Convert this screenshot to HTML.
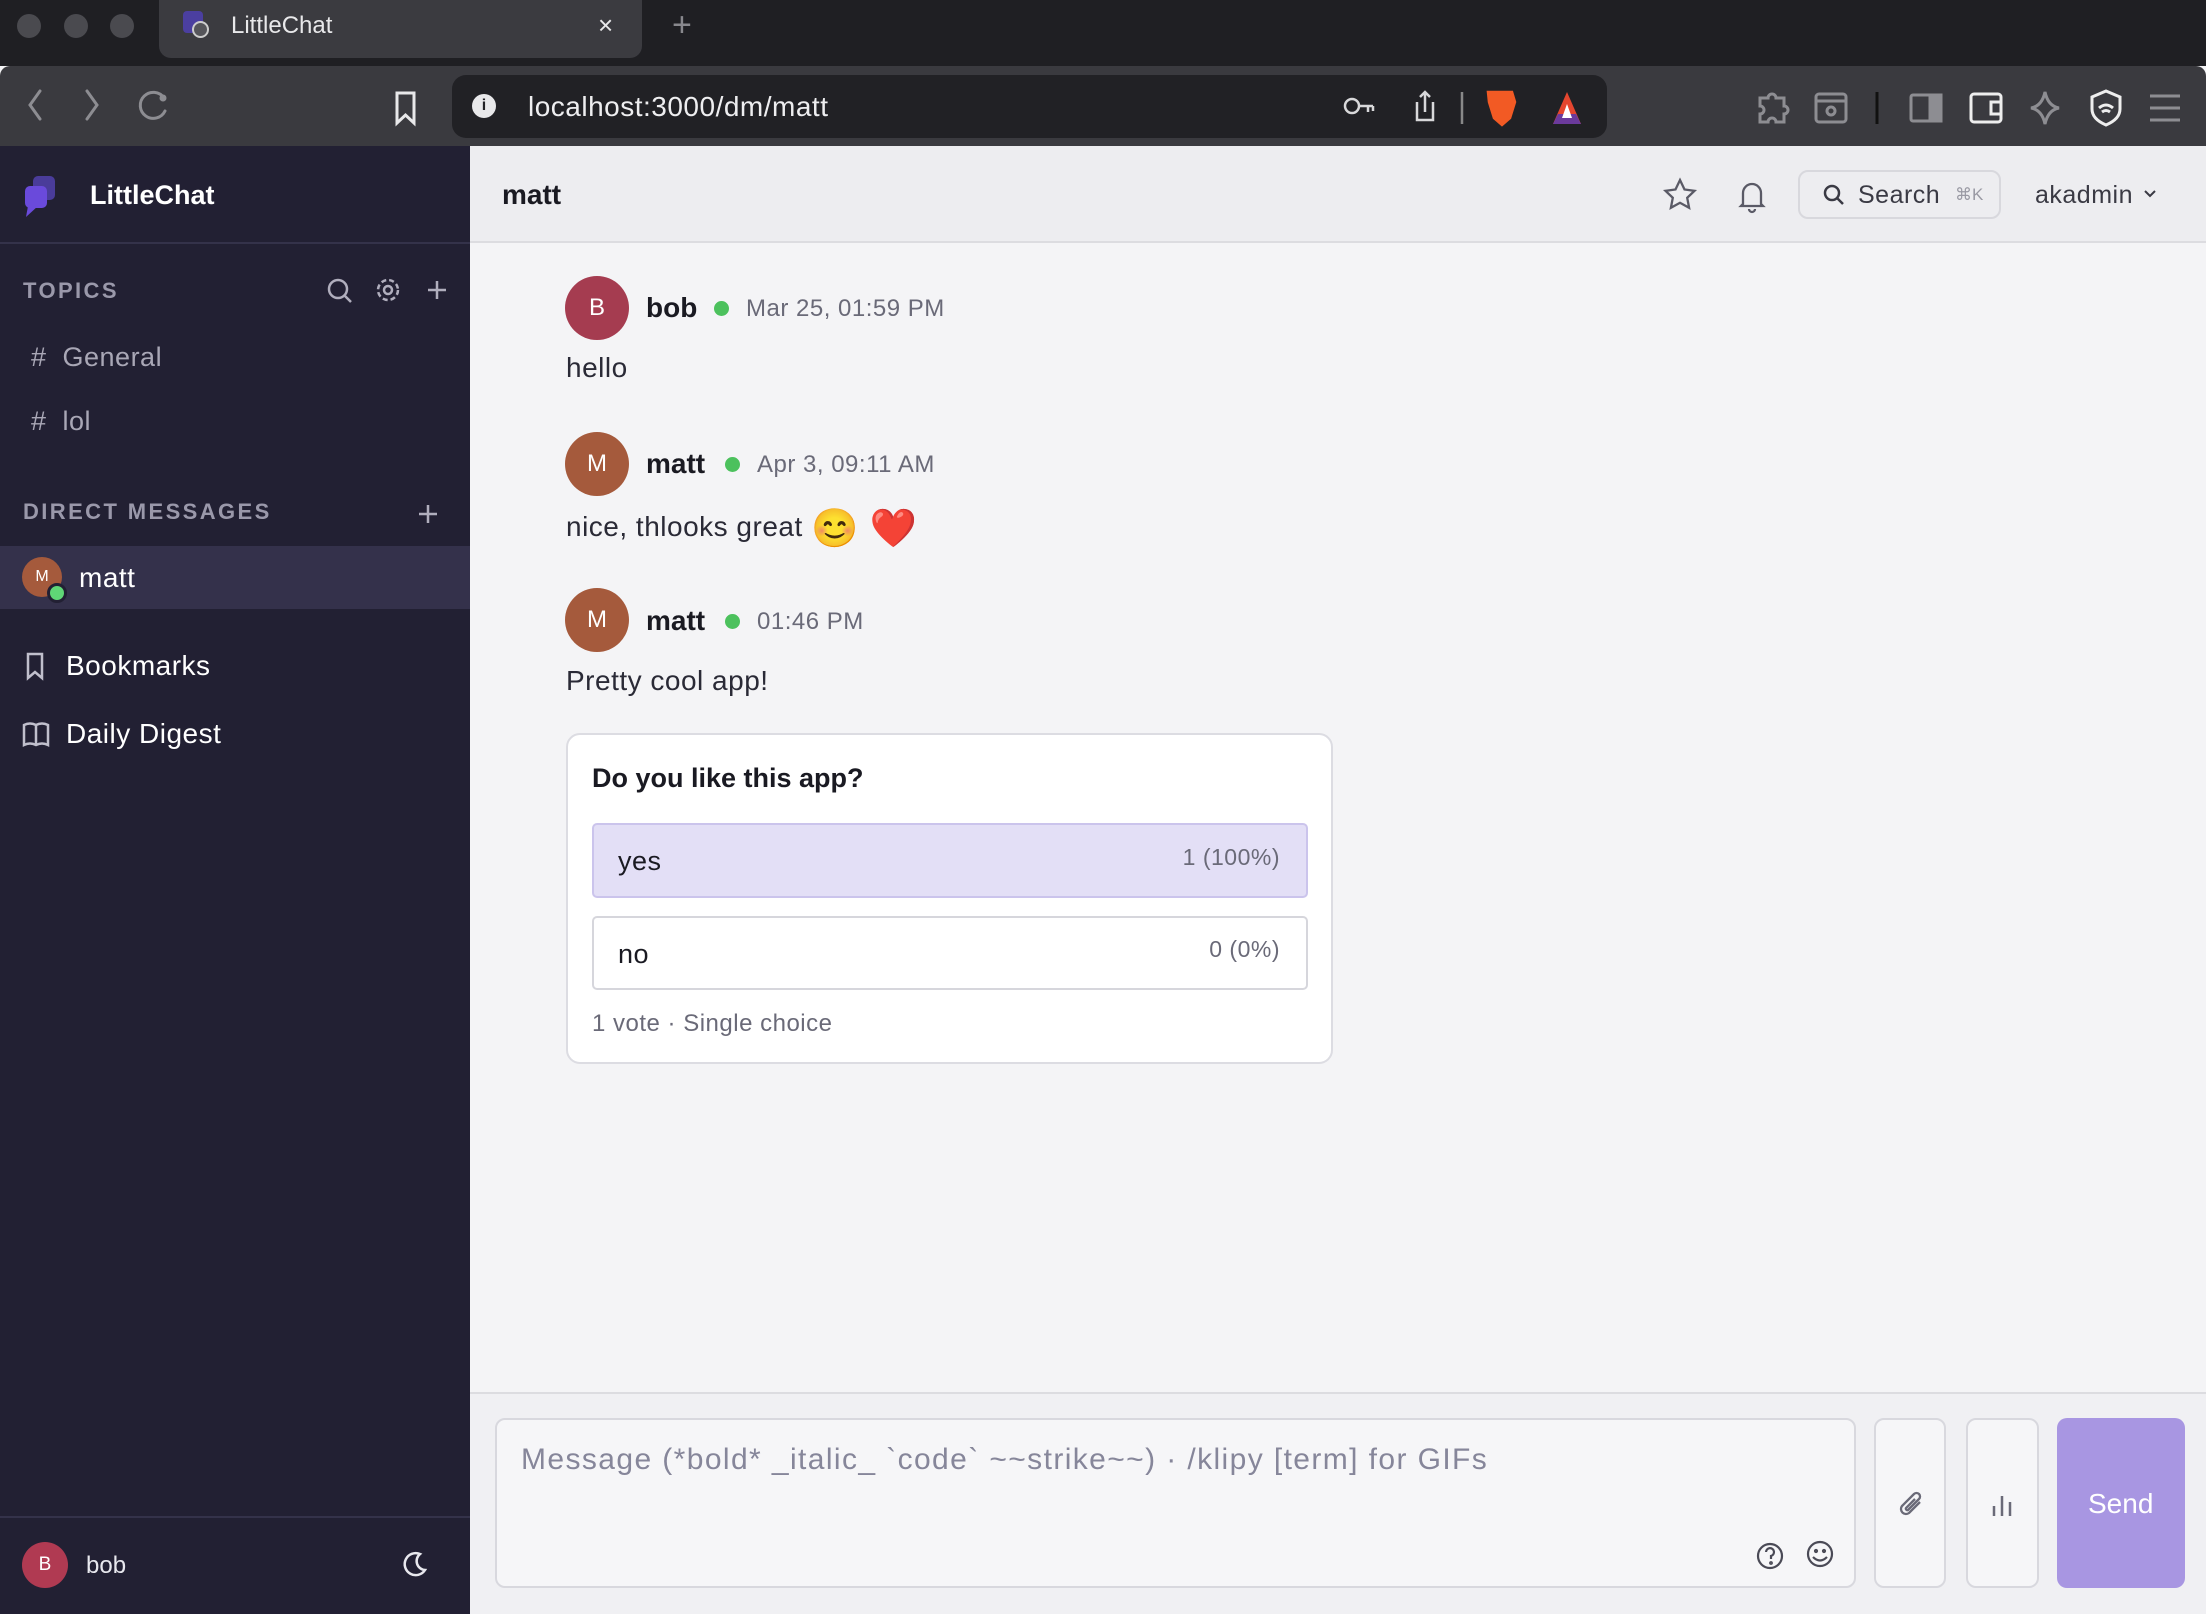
<!DOCTYPE html>
<html><head><meta charset="utf-8"><style>
*{margin:0;padding:0;box-sizing:border-box}
body{width:2206px;height:1614px;overflow:hidden;font-family:"Liberation Sans",sans-serif;background:#f4f4f6;position:relative}
.a{position:absolute}
.t{position:absolute;white-space:nowrap;line-height:1}
.w{letter-spacing:0.5px}
svg{position:absolute;overflow:visible}
</style></head><body>
<!-- tab bar -->
<div class="a" style="left:0;top:0;width:2206px;height:66px;background:#1f1f23"></div>
<div class="a" style="left:17px;top:14px;width:24px;height:24px;border-radius:50%;background:#4a4a4f"></div>
<div class="a" style="left:64px;top:14px;width:24px;height:24px;border-radius:50%;background:#4a4a4f"></div>
<div class="a" style="left:110px;top:14px;width:24px;height:24px;border-radius:50%;background:#4a4a4f"></div>
<div class="a" style="left:159px;top:0;width:483px;height:58px;background:#3b3b40;border-radius:0 0 12px 12px"></div>
<div class="a" style="left:183px;top:11px;width:20px;height:22px;background:#4b3fa0;border-radius:4px"></div>
<div class="a" style="left:192px;top:21px;width:17px;height:17px;border-radius:50%;background:#55555a;border:2px solid #ccc"></div>
<div class="t" style="left:231px;top:14px;font-size:24px;color:#e8e8ea">LittleChat</div>
<div class="t" style="left:598px;top:12px;font-size:26px;color:#e8e8ea">×</div>
<div class="t" style="left:672px;top:8px;font-size:34px;color:#88888d">+</div>
<!-- toolbar -->
<div class="a" style="left:0;top:66px;width:2206px;height:80px;background:#3a3a3f;border-radius:10px 10px 0 0"></div>
<svg style="left:0;top:66px" width="2206" height="80" fill="none" stroke="#8d8d92" stroke-width="3" stroke-linecap="round">
<path d="M40 25 L30 39 L40 53"/><path d="M87 25 L97 39 L87 53"/>
<path d="M164 32 A13 13 0 1 0 165 45"/><circle cx="163" cy="32" r="2" fill="#8d8d92"/>
<path d="M397 27 h17 v30 l-8.5 -8 l-8.5 8z" stroke="#e8e8ea"/>
</svg>
<div class="a" style="left:452px;top:75px;width:1155px;height:63px;background:#212125;border-radius:14px"></div>
<div class="a" style="left:472px;top:94px;width:24px;height:24px;border-radius:50%;background:#e8e8ea;color:#212125;font-size:16px;text-align:center;line-height:24px;font-weight:bold">i</div>
<div class="t w" style="left:528px;top:93px;font-size:28px;color:#eeeef0">localhost:3000/dm/matt</div>
<svg style="left:1340px;top:90px" width="260" height="36" fill="none" stroke="#d8d8da" stroke-width="2.5">
<circle cx="12" cy="16" r="7"/><path d="M19 16 h14 M28 16 v6 M33 16 v5"/>
<path d="M77 12 v18 h16 v-18 M85 22 v-20 M80 7 l5 -5 l5 5"/>
<path d="M122 2 v32" stroke="#888"/>
<path d="M148 2 h24 l3 10 l-5 16 l-8 7 l-8 -7 l-5 -16z" fill="#f25a24" stroke="#f25a24"/>
<path d="M227 2 l14 32 h-28z" fill="#e5462f" stroke="none"/><path d="M213 34 h28 l-5 -10 h-18z" fill="#6b3a9c" stroke="none"/><path d="M227 14 l5 14 h-10z" fill="#fff" stroke="none"/>
</svg>
<svg style="left:1750px;top:88px" width="440" height="40" fill="none" stroke="#8d8d92" stroke-width="3">
<path d="M10 10 h8 a4 4 0 0 1 8 0 h8 v8 a4 4 0 0 1 0 8 v8 h-8 a4 4 0 0 0 -8 0 h-8 v-8 a4 4 0 0 0 0 -8z"/>
<rect x="66" y="6" width="30" height="28" rx="3"/><path d="M66 13 h30"/><circle cx="81" cy="23" r="4"/>
<path d="M127 4 v32" stroke="#111"/>
<rect x="161" y="7" width="30" height="26" rx="2"/><rect x="180" y="7" width="11" height="26" fill="#8d8d92"/>
<rect x="221" y="6" width="30" height="28" rx="3" stroke="#eee"/><path d="M251 14 h-10 v12 h10" stroke="#eee"/>
<path d="M295 4 q3 14 14 16 q-11 2 -14 16 q-3 -14 -14 -16 q11 -2 14 -16z"/>
<path d="M356 3 l14 6 v12 q0 10 -14 16 q-14 -6 -14 -16 v-12z" stroke="#eee"/><path d="M349 20 q7 -6 14 0 M352 24 q4 -3 8 0" stroke="#eee"/>
<path d="M400 8 h30 M400 20 h30 M400 32 h30"/>
</svg>
<!-- sidebar -->
<div class="a" style="left:0;top:146px;width:470px;height:1468px;background:#222033"></div>
<div class="a" style="left:0;top:242px;width:470px;height:2px;background:#34324a"></div>
<div class="a" style="left:33px;top:176px;width:22px;height:24px;background:#4a3c9a;border-radius:5px"></div>
<div class="a" style="left:25px;top:186px;width:22px;height:22px;background:#6a4adb;border-radius:5px"></div>
<svg style="left:26px;top:206px" width="14" height="12"><path d="M2 0 h10 l-12 11z" fill="#6a4adb"/></svg>
<div class="t" style="left:90px;top:182px;font-size:27px;font-weight:bold;color:#fff">LittleChat</div>
<div class="t" style="left:23px;top:280px;font-size:22px;letter-spacing:2.4px;color:#9a98aa;font-weight:bold">TOPICS</div>
<svg style="left:325px;top:276px" width="120" height="30" fill="none" stroke="#b0aebd" stroke-width="2.5">
<circle cx="13" cy="13" r="9"/><path d="M20 20 l6 6"/>
<circle cx="63" cy="14" r="4"/><circle cx="63" cy="14" r="10" stroke-dasharray="5 3"/>
<path d="M103 14 h18 M112 5 v18"/>
</svg>
<div class="t w" style="left:31px;top:344px;font-size:27px;color:#a9a7b6">#&nbsp;&nbsp;General</div>
<div class="t w" style="left:31px;top:408px;font-size:27px;color:#a9a7b6">#&nbsp;&nbsp;lol</div>
<div class="t" style="left:23px;top:501px;font-size:22px;letter-spacing:2.4px;color:#9a98aa;font-weight:bold">DIRECT MESSAGES</div>
<svg style="left:416px;top:500px" width="30" height="30" stroke="#b0aebd" stroke-width="2.5"><path d="M3 14 h18 M12 5 v18"/></svg>
<div class="a" style="left:0;top:546px;width:470px;height:63px;background:#34314b"></div>
<div class="a" style="left:22px;top:557px;width:40px;height:40px;border-radius:50%;background:#a55a3c;color:#fff;font-size:16px;text-align:center;line-height:40px">M</div>
<div class="a" style="left:47px;top:583px;width:20px;height:20px;border-radius:50%;background:#5fd676;border:3px solid #222033"></div>
<div class="t w" style="left:79px;top:564px;font-size:28px;color:#fff">matt</div>
<svg style="left:24px;top:652px" width="24" height="28" fill="none" stroke="#c0bfcc" stroke-width="2.5"><path d="M4 2 h14 v24 l-7 -6 l-7 6z"/></svg>
<div class="t w" style="left:66px;top:652px;font-size:28px;color:#fff">Bookmarks</div>
<svg style="left:22px;top:720px" width="30" height="28" fill="none" stroke="#c0bfcc" stroke-width="2.5"><path d="M14 5 q-6 -3 -12 0 v20 q6 -3 12 0 q6 -3 12 0 v-20 q-6 -3 -12 0z M14 5 v20"/></svg>
<div class="t w" style="left:66px;top:720px;font-size:28px;color:#fff">Daily Digest</div>
<div class="a" style="left:0;top:1516px;width:470px;height:2px;background:#34324a"></div>
<div class="a" style="left:22px;top:1542px;width:46px;height:46px;border-radius:50%;background:#b03a52;color:#fff;font-size:19px;text-align:center;line-height:46px">B</div>
<div class="t" style="left:86px;top:1554px;font-size:24px;color:#e8e8ee">bob</div>
<svg style="left:400px;top:1551px" width="28" height="28" fill="none" stroke="#e8e8ee" stroke-width="2.5"><path d="M20 3 a11 11 0 1 0 5 16 a9 9 0 0 1 -5 -16z"/></svg>
<!-- header -->
<div class="a" style="left:470px;top:146px;width:1736px;height:97px;background:#ededf0;border-bottom:2px solid #dcdce0"></div>
<div class="t" style="left:502px;top:181px;font-size:28px;font-weight:bold;color:#1a1a22">matt</div>
<svg style="left:1664px;top:178px" width="110" height="34" fill="none" stroke="#5a5a66" stroke-width="2.3">
<path d="M16 2 l4.5 9.5 l10 1.3 l-7.3 7 l1.9 10 l-9.1 -5 l-9.1 5 l1.9 -10 l-7.3 -7 l10 -1.3z"/>
<path d="M79 26 v-11 a9 9 0 0 1 18 0 v11 l2 2 h-22z M85 31 a3 3 0 0 0 6 0"/>
</svg>
<div class="a" style="left:1798px;top:170px;width:203px;height:49px;border:2px solid #d8d8dd;border-radius:10px"></div>
<svg style="left:1822px;top:183px" width="24" height="24" fill="none" stroke="#3a3a44" stroke-width="2.5"><circle cx="10" cy="10" r="7"/><path d="M15 15 l6 6"/></svg>
<div class="t w" style="left:1858px;top:183px;font-size:25px;color:#3a3a44">Search</div>
<div class="t" style="left:1955px;top:186px;font-size:17px;color:#9a9aa4">⌘K</div>
<div class="t w" style="left:2035px;top:183px;font-size:25px;color:#3a3a44">akadmin</div>
<svg style="left:2142px;top:188px" width="16" height="12" fill="none" stroke="#3a3a44" stroke-width="2"><path d="M3 3 l5 5 l5 -5"/></svg>
<!-- messages -->
<div class="a" style="left:565px;top:276px;width:64px;height:64px;border-radius:50%;background:#a53c50;color:#fff;font-size:24px;text-align:center;line-height:64px">B</div>
<div class="t" style="left:646px;top:294px;font-size:28px;font-weight:bold;color:#1a1a22">bob</div>
<div class="a" style="left:714px;top:301px;width:15px;height:15px;border-radius:50%;background:#4cc15d"></div>
<div class="t w" style="left:746px;top:297px;font-size:24px;color:#6a6a78">Mar 25, 01:59 PM</div>
<div class="t w" style="left:566px;top:354px;font-size:28px;color:#2a2a36">hello</div>

<div class="a" style="left:565px;top:432px;width:64px;height:64px;border-radius:50%;background:#a55a3c;color:#fff;font-size:24px;text-align:center;line-height:64px">M</div>
<div class="t" style="left:646px;top:450px;font-size:28px;font-weight:bold;color:#1a1a22">matt</div>
<div class="a" style="left:725px;top:457px;width:15px;height:15px;border-radius:50%;background:#4cc15d"></div>
<div class="t w" style="left:757px;top:453px;font-size:24px;color:#6a6a78">Apr 3, 09:11 AM</div>
<div class="t w" style="left:566px;top:510px;font-size:28px;color:#2a2a36">nice, thlooks great <span style="font-size:38px;vertical-align:-5px">😊 ❤️</span></div>

<div class="a" style="left:565px;top:588px;width:64px;height:64px;border-radius:50%;background:#a55a3c;color:#fff;font-size:24px;text-align:center;line-height:64px">M</div>
<div class="t" style="left:646px;top:607px;font-size:28px;font-weight:bold;color:#1a1a22">matt</div>
<div class="a" style="left:725px;top:614px;width:15px;height:15px;border-radius:50%;background:#4cc15d"></div>
<div class="t w" style="left:757px;top:610px;font-size:24px;color:#6a6a78">01:46 PM</div>
<div class="t w" style="left:566px;top:667px;font-size:28px;color:#2a2a36">Pretty cool app!</div>

<div class="a" style="left:566px;top:733px;width:767px;height:331px;background:#fff;border:2px solid #dcdce2;border-radius:14px"></div>
<div class="t" style="left:592px;top:765px;font-size:27px;font-weight:bold;color:#1a1a22">Do you like this app?</div>
<div class="a" style="left:592px;top:823px;width:716px;height:75px;background:#e3dff6;border:2px solid #cbc4ec;border-radius:5px"></div>
<div class="t w" style="left:618px;top:848px;font-size:27px;color:#1a1a22">yes</div>
<div class="t w" style="right:926px;top:846px;font-size:23px;color:#6a6a78">1 (100%)</div>
<div class="a" style="left:592px;top:916px;width:716px;height:74px;background:#fff;border:2px solid #d6d6dc;border-radius:5px"></div>
<div class="t w" style="left:618px;top:941px;font-size:27px;color:#1a1a22">no</div>
<div class="t w" style="right:926px;top:938px;font-size:23px;color:#6a6a78">0 (0%)</div>
<div class="t w" style="left:592px;top:1012px;font-size:24px;color:#6a6a78">1 vote · Single choice</div>
<!-- composer -->
<div class="a" style="left:470px;top:1392px;width:1736px;height:222px;background:#f0f0f3;border-top:2px solid #dcdce0"></div>
<div class="a" style="left:495px;top:1418px;width:1361px;height:170px;background:#f6f6f8;border:2px solid #d8d8de;border-radius:10px"></div>
<div class="t" style="left:521px;top:1445px;font-size:30px;letter-spacing:1.4px;color:#86869a">Message (*bold* _italic_ `code` ~~strike~~) · /klipy [term] for GIFs</div>
<svg style="left:1756px;top:1540px" width="90" height="30" fill="none" stroke="#4a4a56" stroke-width="2.2">
<circle cx="14" cy="16" r="12"/><path d="M10 12 a4 4 0 1 1 5 4 v3"/><circle cx="15" cy="23" r="0.8"/>
<circle cx="64" cy="14" r="12"/><path d="M57 17 q7 7 14 0"/><circle cx="60" cy="11" r="1"/><circle cx="68" cy="11" r="1"/>
</svg>
<div class="a" style="left:1874px;top:1418px;width:72px;height:170px;background:#f6f6f8;border:2px solid #d8d8de;border-radius:10px"></div>
<svg style="left:1894px;top:1488px" width="34" height="34" fill="none" stroke="#6a6a78" stroke-width="2.3"><path d="M26 14 l-11 11 a5 5 0 0 1 -7 -7 l12 -12 a3.5 3.5 0 0 1 5 5 l-11 11 a1.5 1.5 0 0 1 -2 -2 l9 -9"/></svg>
<div class="a" style="left:1966px;top:1418px;width:73px;height:170px;background:#f6f6f8;border:2px solid #d8d8de;border-radius:10px"></div>
<svg style="left:1990px;top:1490px" width="26" height="28" stroke="#6a6a78" stroke-width="2.5"><path d="M4 26 v-10 M12 26 v-20 M20 26 v-14"/></svg>
<div class="a" style="left:2057px;top:1418px;width:128px;height:170px;background:#a896e2;border-radius:10px"></div>
<div class="t" style="left:2088px;top:1490px;font-size:28px;color:#fff">Send</div>
</body></html>
